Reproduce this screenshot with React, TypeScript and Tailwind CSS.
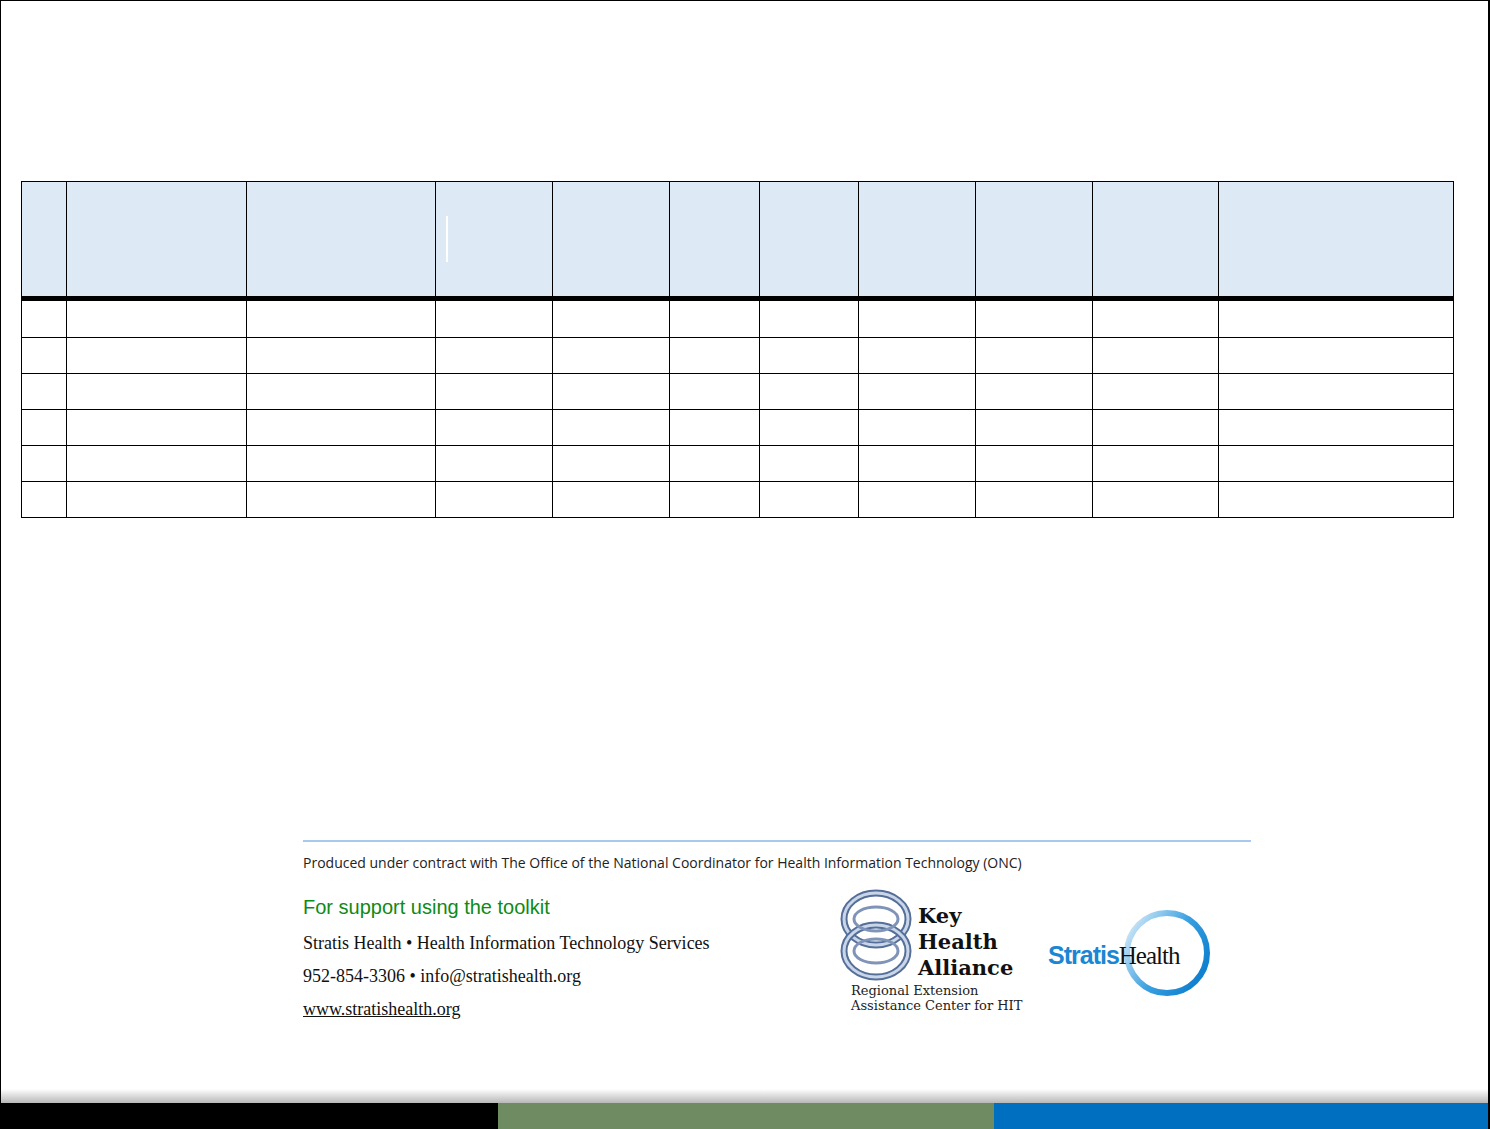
export default function App() {
  const cols = [45, 180, 189, 117, 117, 90, 99, 117, 117, 126, 234];
  const grid = "grid grid-cols-[45px_180px_189px_117px_117px_90px_99px_117px_117px_126px_234px]";
  const rows = [0, 1, 2, 3, 4, 5];
  return (
    <div className="relative w-[1490px] h-[1129px] bg-white overflow-hidden border-l border-t border-r-2 border-black" style={{ fontFamily: '"Liberation Sans", sans-serif' }}>
      <div className="pt-[180px] pl-[20px]">
        <div className="w-[1433px] border border-black">
          <div className={grid + " h-[114px] bg-[#dde9f5]"}>
            {cols.map((_, i) => (
              <div key={i} className={(i < cols.length - 1 ? "border-r border-black " : "") + "relative"}>
                {i === 3 && <div className="absolute left-[10px] top-[34px] w-[2px] h-[46px] bg-white" />}
              </div>
            ))}
          </div>
          <div className="h-[5px] bg-black" />
          {rows.map((r) => (
            <div key={r} className={grid + " h-[36px]" + (r > 0 ? " border-t border-black" : "")}>
              {cols.map((_, i) => (
                <div key={i} className={i < cols.length - 1 ? "border-r border-black" : ""} />
              ))}
            </div>
          ))}
        </div>
      </div>

      <div className="absolute left-[302px] top-[839px] w-[948px] h-[2px] bg-[#a9c8ee]" />
      <div className="absolute left-[302px] top-[851px] text-[14px] text-[#222]" style={{ fontFamily: '"Open Sans", sans-serif' }}>
        Produced under contract with The Office of the National Coordinator for Health Information Technology (ONC)
      </div>
      <div className="absolute left-[302px] top-[891px] text-[20px] text-[#0e8a16]" style={{ fontFamily: '"Liberation Sans", sans-serif' }}>For support using the toolkit</div>
      <div className="absolute left-[302px] top-[926px] text-[18px] leading-[33px] text-[#111]" style={{ fontFamily: '"Liberation Serif", serif' }}>
        <div>Stratis Health • Health Information Technology Services</div>
        <div>952-854-3306 • info@stratishealth.org</div>
        <div className="underline">www.stratishealth.org</div>
      </div>

      {/* Key Health Alliance logo */}
      <svg className="absolute left-[838px] top-[888px]" width="76" height="96" viewBox="0 0 76 96">
        <ellipse cx="37" cy="30" rx="32" ry="26" fill="none" stroke="#566f99" strokeWidth="7" />
        <ellipse cx="37" cy="30" rx="32" ry="26" fill="none" stroke="#c9d6ea" strokeWidth="3" />
        <ellipse cx="37" cy="62" rx="32" ry="26" fill="none" stroke="#566f99" strokeWidth="7" />
        <ellipse cx="37" cy="62" rx="32" ry="26" fill="none" stroke="#c9d6ea" strokeWidth="3" />
        <ellipse cx="37" cy="30" rx="22" ry="12" fill="none" stroke="#7f94b8" strokeWidth="3" />
        <ellipse cx="37" cy="62" rx="22" ry="12" fill="none" stroke="#7f94b8" strokeWidth="3" />
      </svg>
      <div className="absolute left-[917px] top-[902px] text-[21px] font-bold leading-[26px] text-[#111]" style={{ fontFamily: '"DejaVu Serif", serif' }}>
        <div>Key</div><div>Health</div><div>Alliance</div>
      </div>
      <div className="absolute left-[850px] top-[982px] text-[13px] leading-[15px] text-[#222]" style={{ fontFamily: '"DejaVu Serif", serif' }}>
        <div>Regional Extension</div><div>Assistance Center for HIT</div>
      </div>

      {/* Stratis Health logo */}
      <svg className="absolute left-[1118px] top-[906px]" width="96" height="92" viewBox="0 0 96 92">
        <defs>
          <linearGradient id="sg" x1="0" y1="0" x2="1" y2="0.6">
            <stop offset="0" stopColor="#e6f2fb" />
            <stop offset="0.6" stopColor="#3aa0e0" />
            <stop offset="1" stopColor="#1282d0" />
          </linearGradient>
        </defs>
        <circle cx="48" cy="46" r="40" fill="none" stroke="url(#sg)" strokeWidth="6" />
      </svg>
      <div className="absolute left-[1047px] top-[936px] text-[25px] tracking-[-1px]">
        <span className="font-bold text-[#1b86d3]" style={{ fontFamily: '"Liberation Sans", sans-serif' }}>Stratis</span>
        <span className="text-[#111]" style={{ fontFamily: '"Liberation Serif", serif' }}>Health</span>
      </div>

      <div className="absolute left-0 right-0 top-[1088px] h-[14px] bg-gradient-to-b from-white to-[#b8b8b8]" />
      <div className="absolute left-0 right-0 top-[1102px] h-[27px] flex">
        <div className="w-[497px] bg-black" />
        <div className="w-[496px] bg-[#6e8b61]" />
        <div className="flex-1 bg-[#006fc0]" />
      </div>
    </div>
  );
}
